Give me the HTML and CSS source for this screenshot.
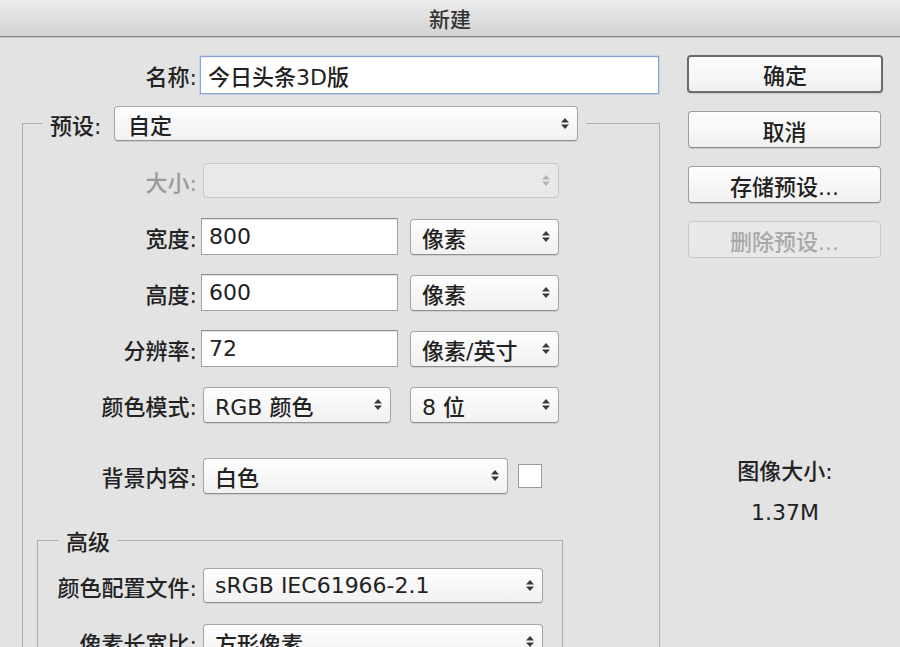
FILE: index.html
```html
<!DOCTYPE html>
<html lang="zh-CN">
<head>
<meta charset="utf-8">
<title>新建</title>
<link rel="stylesheet" href="styles.css">
</head>
<body>
<div class="dialog">
  <div class="titlebar">新建</div>
  <div class="main">
    <div class="form">
      <div class="row name-row">
        <span class="lbl name-lbl">名称:</span>
        <div class="input name-input">今日头条3D版</div>
      </div>

      <fieldset class="group preset">
        <legend class="preset-legend">
          <span class="legend-lbl">预设:</span>
          <div class="select preset-select"><span class="val">自定</span><svg class="arr" viewBox="0 0 8 11" width="8" height="11"><path d="M0 4.5 L4 0 L8 4.5 Z M0 6.5 L8 6.5 L4 11 Z"/></svg></div>
        </legend>

        <div class="row first">
          <span class="lbl off">大小:</span>
          <div class="select off size-select"><span class="val"></span><svg class="arr" viewBox="0 0 8 11" width="8" height="11"><path d="M0 4.5 L4 0 L8 4.5 Z M0 6.5 L8 6.5 L4 11 Z"/></svg></div>
        </div>
        <div class="row">
          <span class="lbl">宽度:</span>
          <div class="input num-input">800</div>
          <div class="select unit-select"><span class="val">像素</span><svg class="arr" viewBox="0 0 8 11" width="8" height="11"><path d="M0 4.5 L4 0 L8 4.5 Z M0 6.5 L8 6.5 L4 11 Z"/></svg></div>
        </div>
        <div class="row">
          <span class="lbl">高度:</span>
          <div class="input num-input">600</div>
          <div class="select unit-select"><span class="val">像素</span><svg class="arr" viewBox="0 0 8 11" width="8" height="11"><path d="M0 4.5 L4 0 L8 4.5 Z M0 6.5 L8 6.5 L4 11 Z"/></svg></div>
        </div>
        <div class="row">
          <span class="lbl">分辨率:</span>
          <div class="input num-input">72</div>
          <div class="select unit-select"><span class="val">像素/英寸</span><svg class="arr" viewBox="0 0 8 11" width="8" height="11"><path d="M0 4.5 L4 0 L8 4.5 Z M0 6.5 L8 6.5 L4 11 Z"/></svg></div>
        </div>
        <div class="row">
          <span class="lbl">颜色模式:</span>
          <div class="select mode-select"><span class="val">RGB 颜色</span><svg class="arr" viewBox="0 0 8 11" width="8" height="11"><path d="M0 4.5 L4 0 L8 4.5 Z M0 6.5 L8 6.5 L4 11 Z"/></svg></div>
          <div class="select unit-select bits"><span class="val">8 位</span><svg class="arr" viewBox="0 0 8 11" width="8" height="11"><path d="M0 4.5 L4 0 L8 4.5 Z M0 6.5 L8 6.5 L4 11 Z"/></svg></div>
        </div>
        <div class="row bg-row">
          <span class="lbl">背景内容:</span>
          <div class="select bg-select"><span class="val">白色</span><svg class="arr" viewBox="0 0 8 11" width="8" height="11"><path d="M0 4.5 L4 0 L8 4.5 Z M0 6.5 L8 6.5 L4 11 Z"/></svg></div>
          <div class="swatch"></div>
        </div>

        <fieldset class="group adv">
          <legend class="adv-legend">高级</legend>
          <div class="row first">
            <span class="lbl">颜色配置文件:</span>
            <div class="select adv-select"><span class="val">sRGB IEC61966-2.1</span><svg class="arr" viewBox="0 0 8 11" width="8" height="11"><path d="M0 4.5 L4 0 L8 4.5 Z M0 6.5 L8 6.5 L4 11 Z"/></svg></div>
          </div>
          <div class="row">
            <span class="lbl">像素长宽比:</span>
            <div class="select adv-select"><span class="val">方形像素</span><svg class="arr" viewBox="0 0 8 11" width="8" height="11"><path d="M0 4.5 L4 0 L8 4.5 Z M0 6.5 L8 6.5 L4 11 Z"/></svg></div>
          </div>
        </fieldset>
      </fieldset>
    </div>

    <div class="side">
      <div class="btn default">确定</div>
      <div class="btn">取消</div>
      <div class="btn">存储预设...</div>
      <div class="btn off">删除预设...</div>
      <div class="info">
        <div>图像大小:</div>
        <div>1.37M</div>
      </div>
    </div>
  </div>
</div>
</body>
</html>
```

FILE: styles.css
```css
* { box-sizing: border-box; }
html, body { margin: 0; padding: 0; }
body {
  width: 900px;
  height: 647px;
  overflow: hidden;
  background: #e3e3e3;
  font-family: "DejaVu Sans", "Noto Sans CJK SC", sans-serif;
  font-size: 22px;
  font-weight: 500;
  color: #222;
}
.dialog {
  width: 900px;
  height: 647px;
  display: flex;
  flex-direction: column;
}
.titlebar {
  flex: none;
  height: 37px;
  display: flex;
  align-items: center;
  justify-content: center;
  background: linear-gradient(#ececec, #d3d3d3);
  border-bottom: 1px solid #8a8a8a;
  box-shadow: 0 1px 0 #c4c4c4;
  font-size: 21px;
  color: #333;
}
.main {
  flex: 1;
  display: flex;
  min-height: 0;
}
.form {
  flex: none;
  width: 670px;
  padding-top: 19px;
}

/* rows */
.row {
  display: flex;
  align-items: center;
  height: 37px;
  margin-top: 19px;
}
.row.first { margin-top: 21px; }
.lbl {
  flex: none;
  width: 174px;
  text-align: right;
  white-space: nowrap;
}
.lbl.off { color: #9a9a9a; }
.name-row { margin-top: 0; height: 38px; }
.name-lbl { width: 197px; }

/* text fields */
.input {
  flex: none;
  height: 37px;
  display: flex;
  align-items: center;
  padding: 0 7px;
  background: #fff;
  border: 1px solid #a3a3a3;
  border-top-color: #8e8e8e;
  box-shadow: inset 0 1px 1px rgba(0,0,0,0.12);
  white-space: nowrap;
}
.name-input {
  margin-left: 3px;
  width: 459px;
  height: 38px;
  border: 1px solid #86a3d2;
  box-shadow: 0 0 0 1px #c4d4ee, inset 0 1px 1px rgba(0,0,0,0.08);
}
.num-input {
  margin-left: 4px;
  width: 197px;
}

/* popup buttons */
.select {
  flex: none;
  height: 36px;
  display: flex;
  align-items: center;
  padding: 0 8px 0 11px;
  background: linear-gradient(#fefefe, #f1f1f1);
  border: 1px solid #a5a5a5;
  border-bottom-color: #8f8f8f;
  border-radius: 4px;
  box-shadow: 0 1px 1px rgba(0,0,0,0.10);
  white-space: nowrap;
}
.select .val { flex: 1; }
.select .arr { flex: none; fill: #3a3a3a; }
.select.off {
  background: #e9e9e9;
  border-color: #c6c6c6;
  box-shadow: none;
}
.select.off .arr { fill: #b3b3b3; }
.size-select { margin-left: 6px; width: 356px; height: 35px; }
.unit-select { margin-left: 12px; width: 149px; }
.mode-select { margin-left: 6px; width: 188px; }
.unit-select.bits { margin-left: 19px; }
.bg-select { margin-left: 6px; width: 305px; }
.adv-select { margin-left: 6px; width: 340px; height: 35px; }

.bg-row { margin-top: 34px; }
.swatch {
  flex: none;
  width: 24px;
  height: 24px;
  margin-left: 10px;
  background: #fff;
  border: 1px solid #9c9c9c;
}

/* group boxes */
.group {
  margin: 0;
  padding: 0;
  min-width: 0;
  border: 1px solid #adadad;
  border-bottom: none;
}
.preset {
  margin: 12px 0 0 22px;
  width: 638px;
  height: 700px;
}
.preset-legend {
  margin-left: 19px;
  padding: 0 8px;
  display: flex;
  align-items: center;
}
.legend-lbl {
  width: 64px;
  white-space: nowrap;
}
.preset-select {
  width: 464px;
  height: 35px;
  padding-left: 13px;
}
.adv {
  margin: 29px 0 0 14px;
  width: 526px;
  height: 300px;
}
.adv-legend {
  margin-left: 20px;
  padding: 6px 8px 0;
  height: 34px;
  line-height: 28px;
}
.adv .row.first { margin-top: 10px; }
.adv .lbl { width: 159px; }

/* right column */
.side {
  flex: none;
  width: 196px;
  margin-left: 17px;
  padding-top: 18px;
  display: flex;
  flex-direction: column;
  align-items: stretch;
}
.btn {
  height: 37px;
  margin: 18px 2px 0 1px;
  display: flex;
  align-items: center;
  justify-content: center;
  background: linear-gradient(#fefefe, #f0f0f0);
  border: 1px solid #9d9d9d;
  border-bottom-color: #888;
  border-radius: 4px;
  box-shadow: 0 1px 1px rgba(0,0,0,0.12);
  white-space: nowrap;
}
.btn.default {
  margin: 0;
  height: 38px;
  border: 2px solid #6b6b6b;
}
.btn.off {
  color: #a8a8a8;
  background: #e8e8e8;
  border-color: #c8c8c8;
  box-shadow: none;
}
.info {
  margin-top: 193px;
  text-align: center;
  line-height: 41px;
}
```
